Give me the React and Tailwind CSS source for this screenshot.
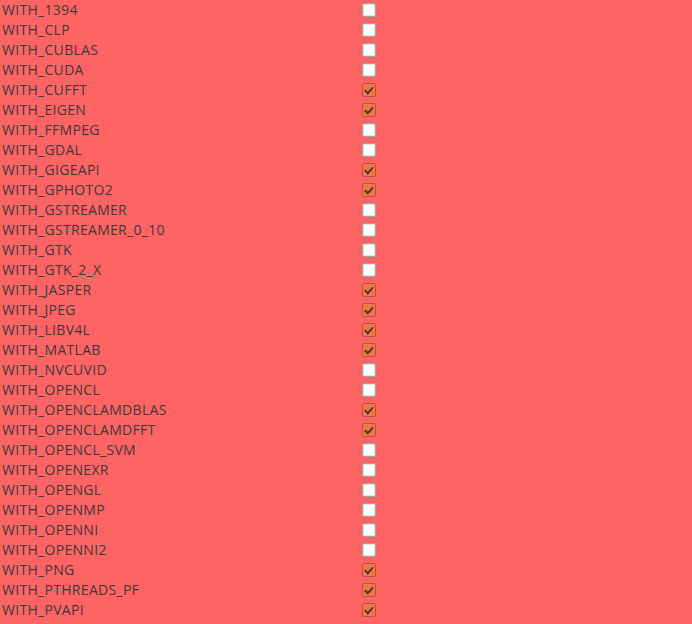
const options = [
  ['WITH_1394', false],
  ['WITH_CLP', false],
  ['WITH_CUBLAS', false],
  ['WITH_CUDA', false],
  ['WITH_CUFFT', true],
  ['WITH_EIGEN', true],
  ['WITH_FFMPEG', false],
  ['WITH_GDAL', false],
  ['WITH_GIGEAPI', true],
  ['WITH_GPHOTO2', true],
  ['WITH_GSTREAMER', false],
  ['WITH_GSTREAMER_0_10', false],
  ['WITH_GTK', false],
  ['WITH_GTK_2_X', false],
  ['WITH_JASPER', true],
  ['WITH_JPEG', true],
  ['WITH_LIBV4L', true],
  ['WITH_MATLAB', true],
  ['WITH_NVCUVID', false],
  ['WITH_OPENCL', false],
  ['WITH_OPENCLAMDBLAS', true],
  ['WITH_OPENCLAMDFFT', true],
  ['WITH_OPENCL_SVM', false],
  ['WITH_OPENEXR', false],
  ['WITH_OPENGL', false],
  ['WITH_OPENMP', false],
  ['WITH_OPENNI', false],
  ['WITH_OPENNI2', false],
  ['WITH_PNG', true],
  ['WITH_PTHREADS_PF', true],
  ['WITH_PVAPI', true],
];

function Box({ checked }) {
  if (!checked) {
    return <div className="w-[14px] h-[14px] rounded-[2px] border border-[#a0a0a0] bg-white shadow-[inset_0_0_0_1px_#e4e4e4]" />;
  }
  return (
    <div className="w-[14px] h-[14px] rounded-[2px] border border-[#b5552f] bg-[#f27748] flex items-center justify-center">
      <svg width="10" height="9" viewBox="0 0 10 9">
        <path d="M1 4.3 L3.8 7.2 L9 1.4" fill="none" stroke="#4a3230" strokeWidth="2" />
      </svg>
    </div>
  );
}

export default function App() {
  return (
    <div className="w-[692px] h-[624px] bg-[#ff6464] overflow-hidden font-['Open_Sans',sans-serif] text-[14px] tracking-[0.3px] text-[#3a3a3a]">
      {options.map(([name, checked]) => (
        <div key={name} className="h-5 flex items-center">
          <div className="w-[362px] pl-[2px] leading-5">{name}</div>
          <Box checked={checked} />
        </div>
      ))}
    </div>
  );
}
